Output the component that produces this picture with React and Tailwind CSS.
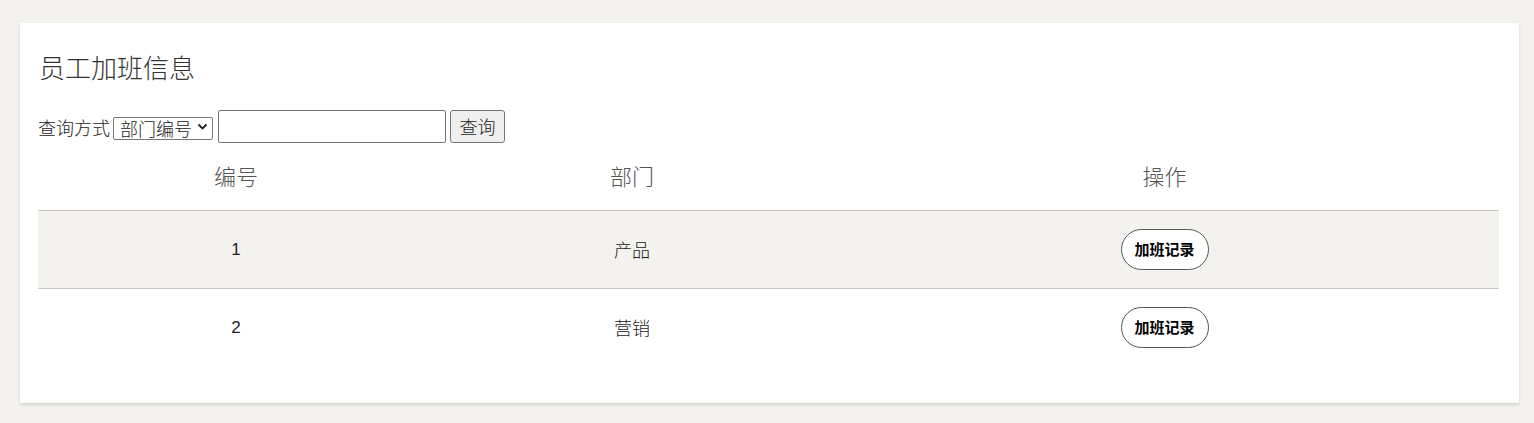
export default function App() {
  const rows = [
    { id: 1, dept: "产品", bg: "bg-[#f3f2ef]" },
    { id: 2, dept: "营销", bg: "bg-white" },
  ];
  const font = { fontFamily: '"Noto Sans CJK SC", "Noto Sans", sans-serif' };
  return (
    <div className="min-h-[423px] bg-[#f3f2ef] pt-[23px] pl-[20px] pr-[15px]" style={font}>
      <div className="bg-white h-[380px] pt-[28px] pl-[18px] pr-[20px] shadow-[0_2px_3px_rgba(0,0,0,0.12)]">
        <h2 className="text-[26px] leading-[32px] font-light text-[#333] pl-px mb-[27px]">员工加班信息</h2>
        <div className="flex items-center h-[33px] text-[18px] font-light text-[#222]">
          <span className="mr-[3px] leading-[24px]">查询方式</span>
          <div className="relative w-[100px] h-[23px] mr-[5px]">
            <select className="appearance-none w-full h-full border border-[#767676] rounded-[2px] bg-white pl-[6px] text-[18px] font-light leading-[21px] text-[#222] outline-none">
              <option>部门编号</option>
              <option>部门名称</option>
            </select>
            <svg className="absolute right-[5px] top-[8px] pointer-events-none" width="11" height="8" viewBox="0 0 11 8">
              <path d="M1.5 1.5 L5.5 5.5 L9.5 1.5" fill="none" stroke="#222" strokeWidth="1.8" />
            </svg>
          </div>
          <input className="w-[228px] h-[33px] border border-[#767676] rounded-[2px] bg-white mr-[4px] outline-none px-1" />
          <button className="w-[55px] h-[33px] border border-[#767676] rounded-[3px] bg-[#efefef] text-[18px] font-light text-[#222]">查询</button>
        </div>
        <div className="grid grid-cols-[396px_396px_1fr] h-[68px] items-center border-b border-[#cbc6bd] text-[22px] font-light text-[#555] text-center pb-[2px]">
          <div>编号</div>
          <div>部门</div>
          <div>操作</div>
        </div>
        {rows.map((r, i) => (
          <div
            key={r.id}
            className={`grid grid-cols-[396px_396px_1fr] items-center text-center text-[18px] font-light text-[#222] ${r.bg} ${i === 0 ? "h-[78px] border-b border-[#cbc6bd]" : "h-[77px]"}`}
          >
            <div style={{ fontFamily: '"Liberation Sans", Arial, sans-serif', fontSize: "17px" }}>{r.id}</div>
            <div>{r.dept}</div>
            <div className="flex justify-center">
              <button className="w-[88px] h-[41px] rounded-full border border-[#555] bg-white text-[15px] font-bold text-black">加班记录</button>
            </div>
          </div>
        ))}
      </div>
    </div>
  );
}
